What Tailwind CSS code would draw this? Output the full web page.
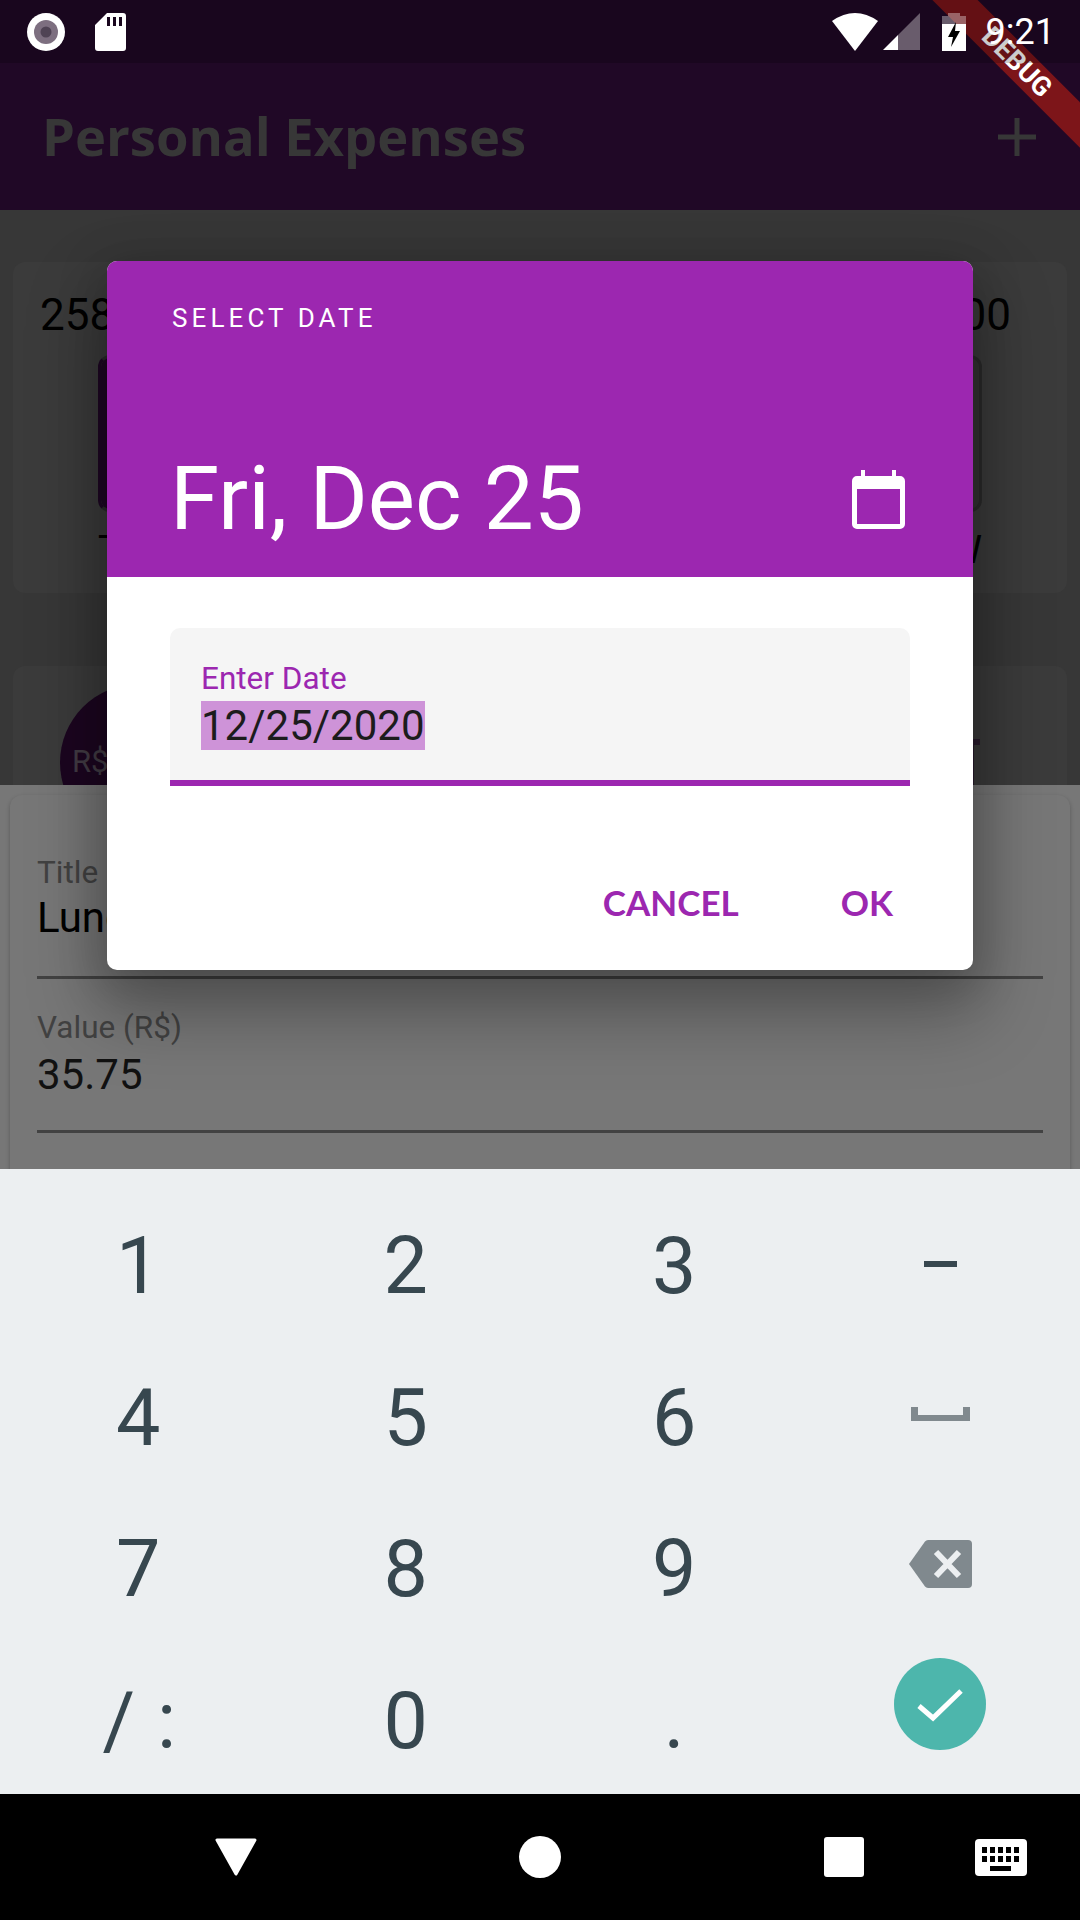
<!DOCTYPE html>
<html lang="en">
<head>
    <meta charset="UTF-8">
    <meta name="viewport" content="width=device-width, initial-scale=1.0">
    <title>Personal Expenses</title>
    <script src="https://cdn.jsdelivr.net/npm/@tailwindcss/browser@4"></script>
</head>
<body class="bg-black">
    <div class="relative w-[1080px] h-[1920px] overflow-hidden font-['Roboto',sans-serif]">

        <!-- App bar -->
        <header class="h-[210px] pt-[63px] bg-[#200826] flex items-center justify-between pl-[42px] pr-[44px]">
            <h1 class="font-['Open_Sans',sans-serif] font-bold text-[52.500px] leading-none text-[#373737]">Personal Expenses</h1>
            <svg class="w-[38px] h-[38px]" viewBox="0 0 38 38"><path fill="#373737" d="M16.500 0h5v16.500H38v5H21.500V38h-5V21.500H0v-5h16.500z"/></svg>
        </header>

        <!-- Dimmed page behind the sheet -->
        <main class="h-[575px] bg-[#373737] pt-[52px] px-[13px] overflow-hidden">
            <section class="h-[331px] rounded-[12px] bg-[#3b3b3b] pt-[28px] text-black text-[44px] leading-[50px]">
                <div class="flex justify-between pl-[27px] pr-[56px]"><span>258</span><span>00</span></div>
                <div class="mt-[15px] ml-[85px] mr-[85px] h-[157px] border-[3px] border-[#2b2b2b] border-l-[#1f0724] rounded-[12px] bg-[#343434] overflow-hidden">
                    <div class="w-[200px] h-full bg-[#1f0724]"></div>
                </div>
                <div class="mt-[16px] flex justify-between px-[85px] text-[38px] leading-[44px]"><span>T</span><span>W</span></div>
            </section>
            <section class="mt-[73px] h-[200px] rounded-[12px] bg-[#3b3b3b] pt-[18px] pl-[47px] pr-[87px] flex items-start justify-between">
                <div class="w-[157px] h-[157px] rounded-full bg-[#1c0620] flex items-center pl-[12px] text-[31px] text-[#423c44]">R$</div>
                <svg class="mt-[55px] w-[50px] h-[50px]" viewBox="0 0 50 50"><path fill="#2a1c2e" d="M0 0h50v6H0zM6 6h38v44H6z"/></svg>
            </section>
        </main>

        <!-- New transaction sheet -->
        <section class="h-[384px] bg-[#777777] pt-[10px] px-[10px] overflow-hidden">
            <div class="h-[400px] rounded-[12px] bg-[#777777] shadow-[0_2px_4px_rgba(0,0,0,0.25)] px-[27px] pt-[57px]">
                <p class="text-[31.500px] leading-[41px] text-[#424242]">Title</p>
                <p class="text-[42px] leading-[50px] text-black">Lunch</p>
                <div class="mt-[33px] h-[3px] bg-[#424242]"></div>
                <p class="mt-[27px] text-[31.500px] leading-[44px] text-[#424242]">Value (R$)</p>
                <p class="text-[42px] leading-[50px] text-[#111111]">35.75</p>
                <div class="mt-[30px] h-[3px] bg-[#424242]"></div>
            </div>
        </section>

        <!-- Number keyboard -->
        <section class="h-[625px] bg-[#eceff1] pt-[22px] px-[3px] grid grid-cols-4 auto-rows-[151.500px] place-items-center text-[79px] text-[#37474f] leading-none">
            <span class="ml-[2px]">1</span><span>2</span><span>3</span>
            <svg class="w-[33px] h-[6px] -mt-[6px] -ml-[4px]" viewBox="0 0 33 6"><rect width="33" height="6" fill="#37474f"/></svg>
            <span class="ml-[2px]">4</span><span>5</span><span>6</span>
            <svg class="w-[59px] h-[14px] -mt-[8px] -ml-[4px]" viewBox="0 0 59 14"><path fill="#80898e" d="M0 0h7v8h45V0h7v14H0z"/></svg>
            <span class="ml-[2px]">7</span><span>8</span><span>9</span>
            <svg class="w-[63px] h-[48px] -mt-[12px] -ml-[4px]" viewBox="0 0 63 48"><path fill="#80898e" d="M19 0h40a4 4 0 0 1 4 4v40a4 4 0 0 1-4 4H19a4 4 0 0 1-3-1.500L0 24 16 1.500A4 4 0 0 1 19 0z"/><path stroke="#eceff1" stroke-width="6" d="M27 12l23 24M50 12L27 36"/></svg>
            <span class="flex gap-[22px] ml-[4px]"><span>/</span><span>:</span></span><span>0</span><span>.</span>
            <div class="w-[92px] h-[92px] rounded-full bg-[#4db6ac] flex items-center justify-center -mt-[34px] -ml-[5px]">
                <svg class="w-[46px] h-[36px]" viewBox="0 0 46 36"><path fill="none" stroke="#fff" stroke-width="5" d="M2 20l14 12L44 5"/></svg>
            </div>
        </section>

        <!-- Navigation bar -->
        <nav class="h-[126px] bg-black flex items-center pl-[215px]">
            <svg class="w-[42px] h-[38px]" viewBox="0 0 42 38"><path fill="#fff" stroke="#fff" stroke-width="3" stroke-linejoin="round" d="M2 2h38L21 36z"/></svg>
            <div class="ml-[262px] w-[42px] h-[42px] rounded-full bg-white"></div>
            <div class="ml-[263px] w-[40px] h-[40px] rounded-[3px] bg-white"></div>
            <svg class="ml-[111px] w-[52px] h-[37px]" viewBox="0 0 52 37">
                <rect width="52" height="37" rx="4" fill="#fff"/>
                <path fill="#000" d="M7 8h5v6H7zM15 8h5v6h-5zM23 8h5v6h-5zM31 8h5v6h-5zM39 8h5v6h-5zM7 17h5v6H7zM15 17h5v6h-5zM23 17h5v6h-5zM31 17h5v6h-5zM39 17h5v6h-5zM15 27h21v5H15z"/>
            </svg>
        </nav>

        <!-- Date dialog -->
        <div class="absolute left-[107px] top-[261px] w-[866px] h-[709px] rounded-[10px] bg-white overflow-hidden flex flex-col shadow-[0_36px_70px_10px_rgba(0,0,0,0.28),0_9px_46px_8px_rgba(0,0,0,0.14)]">
            <div class="h-[316px] bg-[#9c27b0] pl-[65px] pr-[65px] pt-[38px] text-white flex flex-col">
                <p class="text-[26px] leading-[38px] tracking-[4.100px]">SELECT DATE</p>
                <div class="mt-auto mb-[28px] flex items-center justify-between">
                    <p class="-ml-[2px] text-[89px] leading-[100px]">Fri, Dec 25</p>
                    <svg class="w-[53px] h-[59px] mr-[3px]" viewBox="0 0 53 59">
                        <path fill="#fff" d="M9 0h4v6h27V0h4v6h4a5 5 0 0 1 5 5v43a5 5 0 0 1-5 5H5a5 5 0 0 1-5-5V11a5 5 0 0 1 5-5h4zM5 19v35h43V19z"/>
                    </svg>
                </div>
            </div>
            <div class="mt-[51px] mx-[63px] h-[158px] rounded-t-[10px] bg-[#f5f5f5] border-b-[6px] border-[#9c27b0] pl-[31px] pt-[29px]">
                <p class="text-[31.500px] leading-[44px] text-[#9c27b0]">Enter Date</p>
                <p class="w-fit text-[42px] leading-[49px] text-[#1c1c1c] bg-[#ce93d8]">12/25/2020</p>
            </div>
            <div class="mt-auto mb-[43px] flex justify-end pr-[80px] font-['Lato',sans-serif] font-bold text-[35px] leading-[50px] text-[#9c27b0]">
                <span>CANCEL</span>
                <span class="ml-[102px]">OK</span>
            </div>
        </div>

        <!-- Flutter debug banner -->
        <div class="absolute left-[887px] top-[46px] w-[260px] h-[32px] rotate-45 bg-[#7d1519] flex items-center justify-center text-white font-bold text-[27px] leading-none">DEBUG</div>

        <!-- Status bar -->
        <div class="absolute inset-x-0 top-0 h-[63px] bg-black/20 flex items-center pl-[27px] pr-[25px]">
            <svg class="w-[38px] h-[38px]" viewBox="0 0 38 38"><circle cx="19" cy="19" r="19" fill="#fff"/><circle cx="19" cy="19" r="12" fill="#7d6f80"/><circle cx="19" cy="19" r="5.500" fill="#4f4354"/></svg>
            <svg class="ml-[30px] w-[31px] h-[38px]" viewBox="0 0 31 38"><path fill="#fff" fill-rule="evenodd" d="M12 0h16a3 3 0 0 1 3 3v32a3 3 0 0 1-3 3H3a3 3 0 0 1-3-3V12zM12 4v9h3V4zM18 4v9h3V4zM24 4v9h3V4z"/></svg>
            <svg class="ml-auto w-[46px] h-[38px]" viewBox="0 0 46 38"><path fill="#fff" d="M23 38L0 8Q23-8 46 8z"/></svg>
            <svg class="ml-[5px] w-[37px] h-[37px]" viewBox="0 0 37 37"><path fill="#fff" fill-opacity=".35" d="M37 0v37H15V22z"/><path fill="#fff" d="M15 22v15H0z"/></svg>
            <svg class="ml-[22px] w-[24px] h-[38px]" viewBox="0 0 24 38"><path fill="#fff" fill-opacity=".35" d="M6 0h12v3h6v8H0V3h6z"/><path fill="#fff" d="M0 11h24v27H0z"/><path fill="#000" d="M14 9L6 24h5l-2 10 9-16h-5z"/></svg>
            <span class="ml-[20px] text-[36px] leading-none text-white">9:21</span>
        </div>
    </div>
</body>
</html>
